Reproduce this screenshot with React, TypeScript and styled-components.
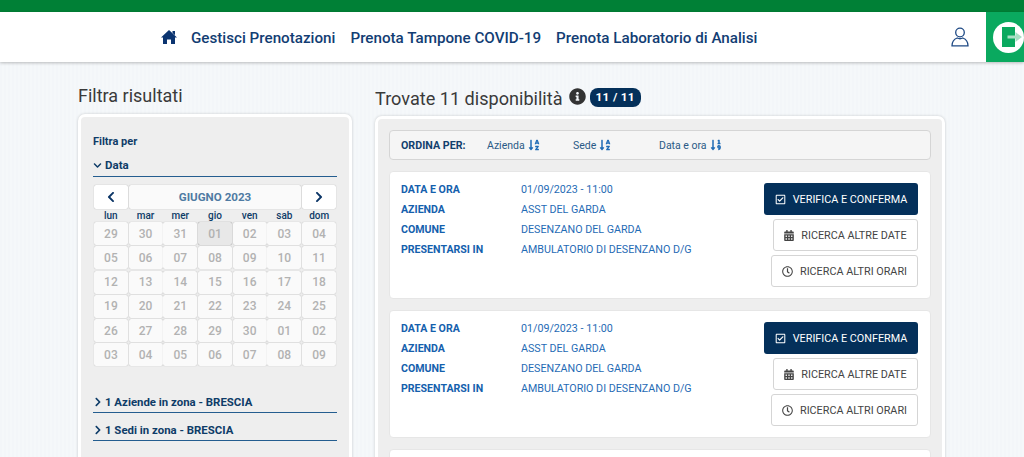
import { Fragment } from 'react';
import styled, { createGlobalStyle } from 'styled-components';
import {
  FaChevronDown, FaChevronLeft, FaChevronRight,
  FaInfoCircle, FaSortAlphaDown, FaSortNumericDown, FaRegCheckSquare, FaCalendarAlt, FaRegClock,
} from 'react-icons/fa';

const GlobalStyle = createGlobalStyle`
  html, body {
    margin: 0;
    height: 457px;
    overflow: hidden;
    font-family: Roboto, "Liberation Sans", sans-serif;
    background: repeating-linear-gradient(90deg, #f3f6f9 0 2px, #f5f8fa 2px 4px);
  }
  * { box-sizing: border-box; }
`;

const TopBar = styled.div`
  height: 12px;
  background: #008036;
`;

const Nav = styled.header`
  height: 50px;
  background: #fff;
  box-shadow: 0 1px 3px rgb(0 0 0 / 25%);
  display: flex;
  align-items: center;
  padding-left: 161px;
  position: relative;
`;

const HomeIcon = styled.svg`
  width: 16px;
  height: 16px;
  margin-right: 14px;
`;

const NavLink = styled.a`
  font-size: 15.2px;
  font-weight: 500;
  color: #123d73;
  margin-right: 15px;
  padding-top: 1px;
  white-space: nowrap;
`;

const NavRight = styled.div`
  margin-left: auto;
  display: flex;
  align-items: center;
  height: 100%;
`;

const UserIcon = styled.svg`
  width: 18px;
  height: 20px;
  margin-right: 17px;
`;

const ExitBox = styled.div`
  width: 38px;
  height: 100%;
  background: #0aa95f;
  overflow: hidden;
  padding: 10px 0 0 7px;
`;

const ExitIcon = styled.svg`
  width: 31px;
  height: 31px;
  display: block;
`;

const Page = styled.main`
  display: flex;
  align-items: flex-start;
  height: 395px;
  overflow: hidden;
  padding: 0 0 0 78px;
  gap: 23px;
`;

const LeftCol = styled.section`
  width: 274px;
  padding-top: 23px;
`;

const RightCol = styled.section`
  width: 570px;
  padding-top: 26px;
`;

const SideTitle = styled.h2`
  margin: 0 0 8px;
  font-size: 18px;
  line-height: 21px;
  font-weight: 400;
  color: #3a3a3a;
`;

const Panel = styled.div`
  background: #eeeeee;
  border: 3px solid #fff;
  border-radius: 7px;
  box-shadow: 0 0 3px rgb(0 0 0 / 18%);
`;

const FilterPanel = styled(Panel)`
  padding: 18px 12px 0;
  height: 400px;
`;

const FilterLabel = styled.div`
  font-size: 11px;
  line-height: 13px;
  font-weight: 700;
  color: #0e3c68;
  margin-bottom: 9px;
`;

const Section = styled.div<{ $mb: number }>`
  display: flex;
  align-items: center;
  gap: 3px;
  height: 20px;
  padding-bottom: 3px;
  border-bottom: 1px solid #245d8f;
  font-size: 11.5px;
  font-weight: 700;
  color: #0e3c68;
  margin-bottom: ${(p) => p.$mb}px;
`;

const SectionWide = styled(Section)`
  font-size: 11.4px;
  gap: 3px;
  padding-left: 1px;
  padding-bottom: 2px;
`;

const DownIcon = styled(FaChevronDown)`
  width: 9px;
  height: 9px;
`;

const RightIcon = styled(FaChevronRight)`
  width: 8px;
  height: 10px;
`;

const Calendar = styled.div`
  padding: 0 1px;
`;

const CalHead = styled.div`
  display: grid;
  grid-template-columns: 34px 1fr 34px;
  gap: 1px;
  height: 24px;
`;

const CalButton = styled.div`
  background: #fff;
  border-radius: 2px;
  box-shadow: 0 0 1px rgb(0 0 0 / 35%);
  display: flex;
  align-items: center;
  justify-content: center;
  color: #0b3566;
  font-size: 11.6px;
  font-weight: 700;
`;

const MonthLabel = styled(CalButton)`
  background: #fafafa;
  color: #4f7ba3;
`;

const ArrowLeft = styled(FaChevronLeft)`
  width: 10px;
  height: 12px;
`;

const ArrowRight = styled(FaChevronRight)`
  width: 10px;
  height: 12px;
`;

const WeekRow = styled.div`
  display: grid;
  grid-template-columns: repeat(7, 1fr);
  column-gap: 1px;
  height: 12px;
  margin-bottom: 1px;
`;

const WeekDay = styled.div`
  font-size: 10px;
  line-height: 13px;
  font-weight: 500;
  text-align: center;
  color: #0e3c68;
`;

const DayGrid = styled.div`
  display: grid;
  grid-template-columns: repeat(7, 1fr);
  grid-auto-rows: 23px;
  gap: 1.3px 0.8px;
  margin-bottom: 27px;
`;

const Day = styled.div<{ $today?: boolean }>`
  background: ${(p) => (p.$today ? '#e8e8e8' : '#fafafa')};
  border-radius: 2px;
  box-shadow: 0 0 1px rgb(0 0 0 / ${(p) => (p.$today ? 55 : 30)}%);
  display: flex;
  align-items: center;
  justify-content: center;
  font-size: 12px;
  font-weight: 500;
  color: #b2b2b2;
`;

const TitleRow = styled.div`
  display: flex;
  align-items: center;
  height: 21px;
  margin-bottom: 7px;
`;

const Title = styled.h1`
  margin: 0;
  font-size: 18.1px;
  line-height: 21px;
  font-weight: 400;
  color: #3a3a3a;
`;

const InfoIcon = styled(FaInfoCircle)`
  width: 17px;
  height: 17px;
  color: #333;
  margin: 0 4px 0 6px;
  position: relative;
  top: -2px;
`;

const CountBadge = styled.span`
  background: #04305a;
  color: #fff;
  font-size: 11.8px;
  font-weight: 700;
  line-height: 19px;
  padding: 0 6px;
  border-radius: 8px;
  letter-spacing: 0.3px;
  position: relative;
  top: -1px;
`;

const ResultsPanel = styled(Panel)`
  padding: 11px 11px 0;
  height: 400px;
  width: 570px;
  overflow: hidden;
`;

const SortBar = styled.div`
  height: 30px;
  background: #f5f5f5;
  border: 1px solid #d5d5d5;
  border-radius: 4px;
  display: flex;
  align-items: center;
  padding-left: 11px;
  margin-bottom: 11px;
`;

const SortTitle = styled.div`
  width: 86px;
  font-size: 10.7px;
  font-weight: 700;
  color: #123f6d;
`;

const SortItem = styled.div`
  width: 86px;
  display: flex;
  align-items: center;
  gap: 3px;
  font-size: 10.5px;
  color: #2a5a86;
  white-space: nowrap;
`;

const SortAlpha = styled(FaSortAlphaDown)`
  width: 12px;
  height: 12px;
  color: #1f6bb5;
`;

const SortNum = styled(FaSortNumericDown)`
  width: 12px;
  height: 12px;
  color: #1f6bb5;
`;

const Card = styled.article`
  height: 128px;
  background: #fff;
  border: 1px solid #e6e6e6;
  border-radius: 4px;
  padding: 11px 12px 0 11px;
  margin-bottom: 11px;
  display: flex;
  justify-content: space-between;
`;

const Info = styled.dl`
  margin: 0;
  display: grid;
  grid-template-columns: 120px auto;
  grid-auto-rows: 20px;
  align-content: start;
`;

const Label = styled.dt`
  font-size: 10.6px;
  line-height: 14px;
  font-weight: 700;
  color: #1460ad;
`;

const Value = styled.dd`
  margin: 0;
  font-size: 10.7px;
  line-height: 14px;
  color: #1f6bb5;
`;

const Actions = styled.div`
  display: flex;
  flex-direction: column;
  align-items: flex-end;
  gap: 4px;
`;

const Primary = styled.button`
  width: 154px;
  height: 32px;
  background: #04305a;
  border: 0;
  border-radius: 3px;
  color: #fff;
  font: 400 10.8px Roboto, sans-serif;
  display: flex;
  align-items: center;
  justify-content: center;
  gap: 7px;
  padding: 0;
`;

const Secondary = styled.button<{ $w: number }>`
  width: ${(p) => p.$w}px;
  height: 32px;
  background: #fff;
  border: 1px solid #d5d5d5;
  border-radius: 3px;
  color: #444;
  font: 400 10.8px Roboto, sans-serif;
  display: flex;
  align-items: center;
  justify-content: center;
  gap: 7px;
  padding: 0;
`;

const BtnIconCheck = styled(FaRegCheckSquare)`
  width: 11px;
  height: 11px;
`;

const BtnIconCal = styled(FaCalendarAlt)`
  width: 10px;
  height: 11px;
  color: #444;
`;

const BtnIconClock = styled(FaRegClock)`
  width: 11px;
  height: 11px;
  color: #444;
`;

const weekDays = ['lun', 'mar', 'mer', 'gio', 'ven', 'sab', 'dom'];
const days = [
  '29', '30', '31', '01', '02', '03', '04',
  '05', '06', '07', '08', '09', '10', '11',
  '12', '13', '14', '15', '16', '17', '18',
  '19', '20', '21', '22', '23', '24', '25',
  '26', '27', '28', '29', '30', '01', '02',
  '03', '04', '05', '06', '07', '08', '09',
];

const rows = [
  ['DATA E ORA', '01/09/2023 - 11:00'],
  ['AZIENDA', 'ASST DEL GARDA'],
  ['COMUNE', 'DESENZANO DEL GARDA'],
  ['PRESENTARSI IN', 'AMBULATORIO DI DESENZANO D/G'],
];

const Result = () => (
  <Card>
    <Info>
      {rows.map((r) => (
        <Fragment key={r[0]}>
          <Label>{r[0]}</Label>
          <Value>{r[1]}</Value>
        </Fragment>
      ))}
    </Info>
    <Actions>
      <Primary><BtnIconCheck />VERIFICA E CONFERMA</Primary>
      <Secondary $w={145}><BtnIconCal />RICERCA ALTRE DATE</Secondary>
      <Secondary $w={147}><BtnIconClock />RICERCA ALTRI ORARI</Secondary>
    </Actions>
  </Card>
);

export default function App() {
  return (
    <>
      <GlobalStyle />
      <TopBar />
      <Nav>
        <HomeIcon viewBox="0 0 16 16" fill="#0b3470">
          <path d="M8 1l8 7.500h-2V15h-4v-4.500H6V15H2V8.500H0z" />
          <path d="M11.500 2H14v4.300l-2.500-2.300z" />
        </HomeIcon>
        <NavLink>Gestisci Prenotazioni</NavLink>
        <NavLink>Prenota Tampone COVID-19</NavLink>
        <NavLink>Prenota Laboratorio di Analisi</NavLink>
        <NavRight>
          <UserIcon viewBox="0 0 18 20" fill="none" stroke="#1f4a85" strokeWidth="1.3">
            <circle cx="9" cy="5.500" r="4.300" />
            <path d="M1 18.800c0-4 2.500-6.800 5.200-7.800 1.700.9 3.900.9 5.600 0 2.700 1 5.200 3.800 5.200 7.800z" />
          </UserIcon>
          <ExitBox>
            <ExitIcon viewBox="0 0 31 31">
              <circle cx="15.500" cy="15.500" r="15.500" fill="#fff" />
              <path d="M9 5h13v20H9z" fill="#0aa95f" />
              <path d="M14.500 13.500h8v-3.500l6.500 5-6.500 5v-3.500h-8z" fill="#a7dfc3" />
            </ExitIcon>
          </ExitBox>
        </NavRight>
      </Nav>
      <Page>
        <LeftCol>
          <SideTitle>Filtra risultati</SideTitle>
          <FilterPanel>
            <FilterLabel>Filtra per</FilterLabel>
            <Section $mb={8}><DownIcon />Data</Section>
            <Calendar>
              <CalHead>
                <CalButton><ArrowLeft /></CalButton>
                <MonthLabel>GIUGNO 2023</MonthLabel>
                <CalButton><ArrowRight /></CalButton>
              </CalHead>
              <WeekRow>
                {weekDays.map((d) => <WeekDay key={d}>{d}</WeekDay>)}
              </WeekRow>
              <DayGrid>
                {days.map((d, i) => <Day key={i} $today={i === 3}>{d}</Day>)}
              </DayGrid>
            </Calendar>
            <SectionWide $mb={8}><RightIcon />1 Aziende in zona - BRESCIA</SectionWide>
            <SectionWide $mb={0}><RightIcon />1 Sedi in zona - BRESCIA</SectionWide>
          </FilterPanel>
        </LeftCol>
        <RightCol>
          <TitleRow>
            <Title>Trovate 11 disponibilità</Title>
            <InfoIcon />
            <CountBadge>11 / 11</CountBadge>
          </TitleRow>
          <ResultsPanel>
            <SortBar>
              <SortTitle>ORDINA PER:</SortTitle>
              <SortItem>Azienda <SortAlpha /></SortItem>
              <SortItem>Sede <SortAlpha /></SortItem>
              <SortItem>Data e ora <SortNum /></SortItem>
            </SortBar>
            <Result />
            <Result />
            <Card />
          </ResultsPanel>
        </RightCol>
      </Page>
    </>
  );
}
